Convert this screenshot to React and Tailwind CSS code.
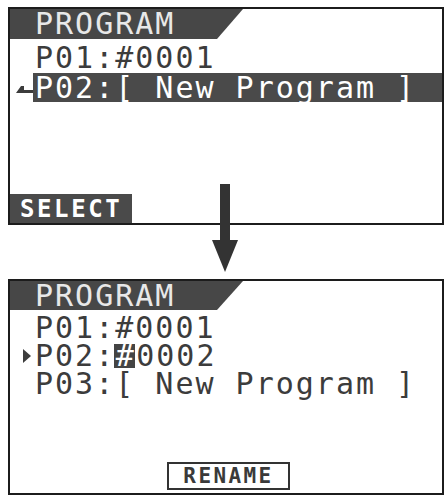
import React from 'react';

const mono = "font-['DejaVu_Sans_Mono',monospace]";

// LCD style header tab with the slanted right edge
const Header = ({ h }) => (
  <div
    className={`${h} w-[233px] bg-[#474747] [clip-path:polygon(0_0,100%_0,calc(100%-26px)_100%,0_100%)] flex items-center pl-[25px]`}
  >
    <span className={`${mono} text-[30px] leading-[26px] tracking-[2px] text-[#e8e8e8]`}>PROGRAM</span>
  </div>
);

const Row = ({ children, className = '' }) => (
  <div className={`flex items-center pl-[25px] whitespace-pre ${mono} text-[30px] leading-[26px] tracking-[2px] text-[#3c3c3c] ${className}`}>
    {children}
  </div>
);

const App = () => {
  return (
    <div className="relative w-[446px] h-[498px] bg-white overflow-hidden">
      {/* Before: selecting a program */}
      <div className="mt-[7px] ml-[8px] w-[436px] h-[218px] border-2 border-[#1c1c1c] flex flex-col">
        <Header h="h-[30px]" />
        <Row className="h-[30px] mt-[4px]">P01:#0001</Row>
        <div className="h-[29px] flex items-center">
          <svg width="23" height="29" viewBox="0 0 23 29" className="shrink-0">
            <polygon points="6,20 11,13 14,13 14,17 23,17 23,20" fill="#3c3c3c" />
          </svg>
          <div className={`flex-1 h-full bg-[#4a4a4a] flex items-center pl-[2px] whitespace-pre ${mono} text-[30px] leading-[26px] tracking-[2px] text-white`}>
            P02:[ New Program ]
          </div>
        </div>
        <div className="mt-auto h-[29px] w-[122px] bg-[#4a4a4a] flex items-center pl-[10px]">
          <span className={`${mono} font-bold text-[24px] leading-[22px] tracking-[2.6px] text-white`}>SELECT</span>
        </div>
      </div>

      {/* After: renaming */}
      <div className="mt-[54px] ml-[8px] w-[436px] h-[216px] border-2 border-[#1c1c1c] flex flex-col">
        <Header h="h-[29px]" />
        <Row className="h-[28px] mt-[4px]">P01:#0001</Row>
        <div className="h-[28px] flex items-center">
          <svg width="25" height="28" viewBox="0 0 25 28" className="shrink-0">
            <polygon points="13,7 21,14 13,21" fill="#3c3c3c" />
          </svg>
          <div className={`flex items-center whitespace-pre ${mono} text-[30px] leading-[24px] tracking-[2px] text-[#3c3c3c]`}>
            <span>P02:</span>
            <span className="bg-[#444] text-white h-[24px] w-[21px] -ml-[1px] flex items-center justify-center tracking-normal">#</span>
            <span className="ml-[1px]">0002</span>
          </div>
        </div>
        <Row className="h-[28px]">P03:[ New Program ]</Row>
        <div className="mt-auto mb-[3px] ml-[157px] h-[28px] w-[123px] border-2 border-[#333] bg-white flex items-center justify-center">
          <span className={`${mono} font-bold text-[21px] leading-[20px] tracking-[2.4px] text-[#3a3a3a]`}>RENAME</span>
        </div>
      </div>

      {/* Down arrow between the two screens */}
      <svg className="absolute left-[212px] top-[184px]" width="26" height="88" viewBox="0 0 26 88">
        <rect x="8" y="0" width="10" height="57" fill="#333" />
        <polygon points="0,56 26,56 13,88" fill="#333" />
      </svg>
    </div>
  );
};

export default App;
